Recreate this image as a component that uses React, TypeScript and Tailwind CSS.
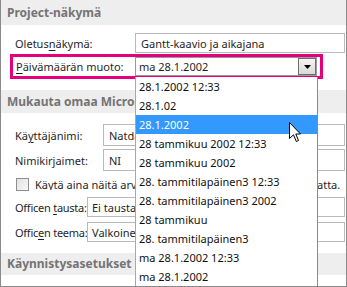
import React from "react";

const items = [
  "28.1.2002 12:33",
  "28.1.02",
  "28.1.2002",
  "28 tammikuu 2002 12:33",
  "28 tammikuu 2002",
  "28. tammitilapäinen3 12:33",
  "28. tammitilapäinen3 2002",
  "28 tammikuu",
  "28. tammitilapäinen3",
  "ma 28.1.2002 12:33",
  "ma 28.1.2002",
];

function U({ children }: { children: React.ReactNode }) {
  return <span className="underline underline-offset-2 decoration-1">{children}</span>;
}

function Header({ children, h }: { children: React.ReactNode; h: string }) {
  return (
    <div className={`${h} bg-[#eeeeee] pl-[6px] flex items-center font-bold text-[12px] text-[#747474] whitespace-nowrap overflow-hidden`}>
      {children}
    </div>
  );
}

export default function App() {
  return (
    <div className="relative w-[347px] h-[287px] overflow-hidden bg-white border-l border-r border-b border-[#8a8a8a] text-[11px] leading-none text-[#1f1f1f] font-['Noto_Sans','Liberation_Sans',sans-serif]">
      <div className="flex flex-col">
        <Header h="h-[25px]">Project-näkymä</Header>

        <div className="mt-[8px] flex items-center h-[20px]">
          <div className="w-[134px] pl-[14px]">
            Oletus<U>n</U>äkymä:
          </div>
          <div className="flex-1 mr-[1px] h-[20px] border border-[#b9b9b9] pl-[5px] flex items-center whitespace-nowrap">
            Gantt-kaavio ja aikajana
          </div>
        </div>

        <div className="mt-[1px] ml-[9px] w-[313px] h-[25px] border-[3px] border-[#e4007c] flex items-center">
          <div className="w-[122px] pl-[3px]">
            <U>P</U>äivämäärän muoto:
          </div>
          <div className="w-[182px] h-[19px] border border-[#9a9a9a] flex items-center">
            <div className="flex-1 pl-[3px]">ma 28.1.2002</div>
            <div className="w-[18px] h-[17px] border border-[#6e6e6e] bg-gradient-to-b from-[#f4f4f4] to-[#d9d9d9] flex items-center justify-center">
              <svg width="7" height="4" viewBox="0 0 7 4">
                <path d="M0 0 H7 L3.5 4 Z" fill="#000" />
              </svg>
            </div>
          </div>
        </div>

        <div className="mt-[11px]">
          <Header h="h-[23px]">Mukauta omaa Microsoft Office -kopiota</Header>
        </div>

        <div className="mt-[11px] flex items-center h-[22px]">
          <div className="w-[102px] pl-[14px]">
            Kä<U>y</U>ttäjänimi:
          </div>
          <div className="flex-1 mr-[1px] h-[22px] border border-[#b9b9b9] pl-[5px] flex items-center">Natdanai I</div>
        </div>

        <div className="mt-[3px] flex items-center h-[22px]">
          <div className="w-[102px] pl-[14px]">Nimikirjaimet:</div>
          <div className="flex-1 mr-[1px] h-[22px] border border-[#b9b9b9] pl-[5px] flex items-center">NI</div>
        </div>

        <div className="mt-[6px] flex items-center h-[15px]">
          <div className="ml-[15px] w-[13px] h-[13px] border border-[#8f8f8f] bg-gradient-to-br from-[#e2e2e2] to-[#f7f7f7]" />
          <div className="ml-[6px] flex whitespace-nowrap">
            <span className="w-[282px] overflow-hidden">Käytä aina näitä arvoja Officeen kirjautumisesta riippum</span>
            <span>atta.</span>
          </div>
        </div>

        <div className="mt-[5px] flex items-center h-[20px]">
          <div className="w-[86px] pl-[14px] whitespace-nowrap tracking-[-0.25px]">
            Officen <U>t</U>austa:
          </div>
          <div className="flex-1 mr-[1px] h-[20px] border border-[#b9b9b9] pl-[4px] flex items-center">Ei taustaa</div>
        </div>

        <div className="mt-[5px] flex items-center h-[20px]">
          <div className="w-[86px] pl-[14px] whitespace-nowrap tracking-[-0.25px]">
            Offic<U>e</U>n teema:
          </div>
          <div className="flex-1 mr-[1px] h-[20px] border border-[#b9b9b9] pl-[4px] flex items-center">Valkoinen</div>
        </div>

        <div className="mt-[11px]">
          <Header h="h-[22px]">Käynnistysasetukset</Header>
        </div>
      </div>

      <div className="absolute left-[134px] top-[77px] w-[183px] bottom-0 bg-white border-l border-r border-l-[#a8a8a8] border-r-[#8a8a8a] flex flex-col">
        {items.map((t, i) => (
          <div
            key={i}
            className={`h-[19px] shrink-0 pl-[3px] flex items-center whitespace-nowrap ${
              i === 2 ? "bg-[#3399ff] text-white" : "text-[#111111]"
            }`}
          >
            {t}
          </div>
        ))}
      </div>

      <svg className="absolute left-[288px] top-[122px]" width="13" height="21" viewBox="0 0 13 21">
        <path
          d="M0.5 0.5 V16.5 L4.5 12.8 L7.3 19.5 L9.5 18.5 L6.8 12 H11.5 Z"
          fill="#fff"
          stroke="#000"
          strokeWidth="1"
          strokeLinejoin="miter"
        />
      </svg>
    </div>
  );
}
